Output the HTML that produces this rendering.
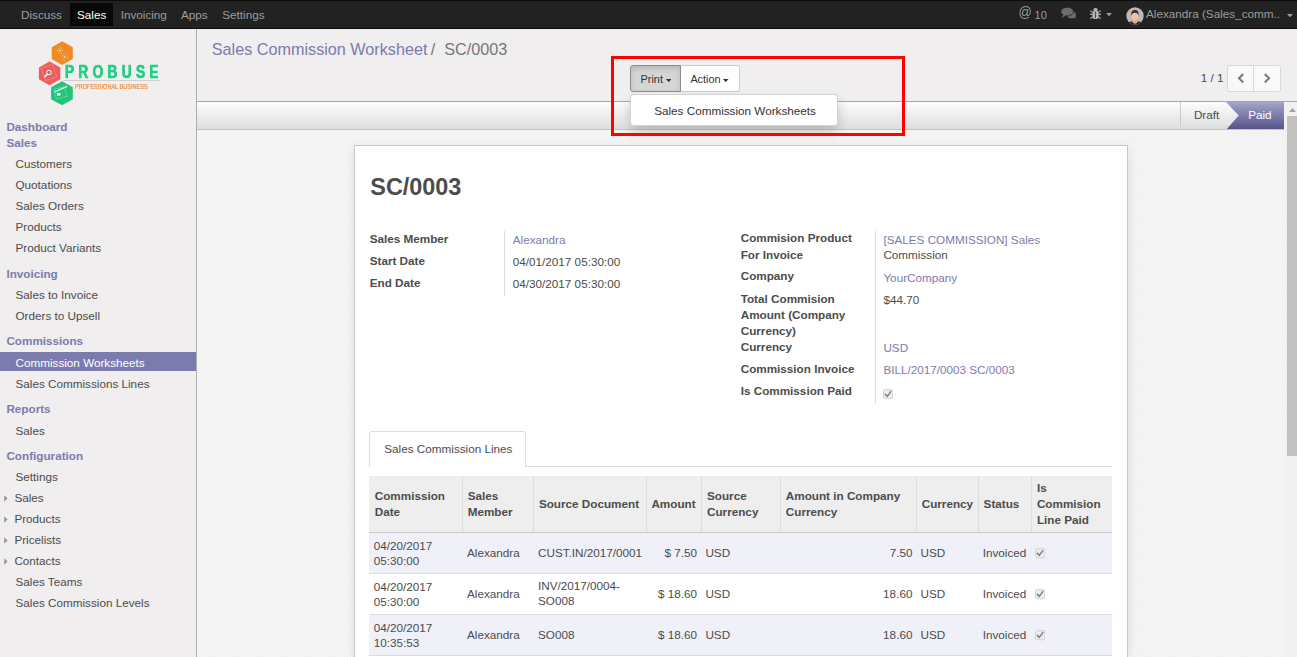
<!DOCTYPE html>
<html><head><meta charset="utf-8"><style>
html,body{margin:0;padding:0;width:1297px;height:657px;overflow:hidden;background:#f0eeee;font-family:"Liberation Sans",sans-serif;}
.b{position:absolute;}
.t{position:absolute;white-space:nowrap;}
.r{text-align:right;}
</style></head><body>
<div class="b" style="left:0px;top:0px;width:1297px;height:29px;background:#0b0b0b;"></div>
<div class="b" style="left:0px;top:1px;width:1297px;height:27px;background:#222;"></div>
<div class="b" style="left:70px;top:3px;width:43px;height:23px;background:#080808;"></div>
<div class="t " style="left:21.00px;top:6.74px;font-size:11.71px;line-height:16px;color:#9d9d9d;">Discuss</div>
<div class="t " style="left:77.00px;top:6.74px;font-size:11.71px;line-height:16px;color:#fff;">Sales</div>
<div class="t " style="left:120.70px;top:6.74px;font-size:11.71px;line-height:16px;color:#9d9d9d;">Invoicing</div>
<div class="t " style="left:181.00px;top:6.74px;font-size:11.71px;line-height:16px;color:#9d9d9d;">Apps</div>
<div class="t " style="left:222.30px;top:6.74px;font-size:11.71px;line-height:16px;color:#9d9d9d;">Settings</div>
<div class="t " style="left:1018.60px;top:4.02px;font-size:13.2px;line-height:18px;color:#9d9d9d;transform:scaleY(1.05);transform-origin:0 80%;">@</div>
<div class="t " style="left:1034.60px;top:7.89px;font-size:11px;line-height:15px;color:#9d9d9d;">10</div>
<svg class="b" style="left:1058px;top:5px" width="22" height="17" viewBox="1058 5 22 17"><ellipse cx="1071.6" cy="14.9" rx="4.3" ry="3.4" fill="#6c6c6c"/><path d="M1073.5 17l2.4 1.9-0.6-2.9z" fill="#6c6c6c"/><ellipse cx="1067.2" cy="11.6" rx="6.4" ry="4.4" fill="#6c6c6c" stroke="#222" stroke-width="0.8"/><path d="M1063.4 14.6l-1.8 3.3 4.2-2.3z" fill="#6c6c6c"/></svg>
<svg class="b" style="left:1088px;top:6px" width="16" height="15" viewBox="1088 6 16 15"><ellipse cx="1095.5" cy="9.6" rx="2.2" ry="1.5" fill="#b4b4b4"/><rect x="1092.4" y="10.6" width="6.2" height="8.4" rx="2.6" fill="#b4b4b4"/><path d="M1090.2 10.6l2.4 1.8M1100.8 10.6l-2.4 1.8M1090 14.4h2.5M1101 14.4h-2.5M1090.4 18.6l2.2-1.8M1100.6 18.6l-2.2-1.8" stroke="#b4b4b4" stroke-width="1.1"/><rect x="1095" y="11.6" width="1" height="6.6" fill="#4a4470"/></svg>
<svg class="b" style="left:1106.4px;top:13px" width="6" height="3.5" viewBox="0 0 6 3.5"><path d="M0 0h6L3 3.3z" fill="#9d9d9d"/></svg>
<svg class="b" style="left:1125.5px;top:6.8px" width="18" height="18" viewBox="0 0 18 18"><clipPath id="av"><circle cx="9" cy="9" r="8.7"/></clipPath><g clip-path="url(#av)"><rect width="18" height="18" fill="#bdb8b3"/><path d="M0.5 18.5c1-3.2 3.6-4.6 8.5-4.6s7.5 1.4 8.5 4.6z" fill="#2e2e33"/><path d="M6 14.2L9 17.2 12 14.2z" fill="#fff"/><path d="M8.5 14.8h1l0.2 2.6-0.7 0.8-0.7-0.8z" fill="#d0202a"/><path d="M6.6 12.5h4.8v2.2l-2.4 1.6-2.4-1.6z" fill="#e0a890"/><ellipse cx="9" cy="9.2" rx="3.3" ry="4.1" fill="#efbfa6"/><path d="M5.3 9.3C4.9 4.6 6.6 3.1 9 3.1s4.1 1.5 3.7 6.2c-0.3-2.4-1.2-3.6-3.7-3.6s-3.4 1.2-3.7 3.6z" fill="#303036"/></g></svg>
<div class="t " style="left:1146.00px;top:5.94px;font-size:11.71px;line-height:16px;color:#9d9d9d;">Alexandra (Sales_comm..</div>
<svg class="b" style="left:1286.5px;top:13.5px" width="6" height="3.5" viewBox="0 0 6 3.5"><path d="M0 0h6L3 3.3z" fill="#9d9d9d"/></svg>
<div class="b" style="left:0px;top:29px;width:196px;height:628px;background:#f0eeee;"></div>
<div class="b" style="left:196px;top:29px;width:1px;height:628px;background:#acacb4;"></div>
<div class="b" style="left:0px;top:352px;width:196px;height:19px;background:#7c7bad;"></div>
<div class="t " style="left:6.40px;top:118.74px;font-size:11.71px;line-height:16px;color:#7c7bad;font-weight:bold;">Dashboard</div>
<div class="t " style="left:6.40px;top:134.84px;font-size:11.71px;line-height:16px;color:#7c7bad;font-weight:bold;">Sales</div>
<div class="t " style="left:6.40px;top:265.94px;font-size:11.71px;line-height:16px;color:#7c7bad;font-weight:bold;">Invoicing</div>
<div class="t " style="left:6.40px;top:332.84px;font-size:11.71px;line-height:16px;color:#7c7bad;font-weight:bold;">Commissions</div>
<div class="t " style="left:6.40px;top:400.94px;font-size:11.71px;line-height:16px;color:#7c7bad;font-weight:bold;">Reports</div>
<div class="t " style="left:6.40px;top:447.84px;font-size:11.71px;line-height:16px;color:#7c7bad;font-weight:bold;">Configuration</div>
<div class="t " style="left:15.50px;top:155.54px;font-size:11.71px;line-height:16px;color:#4c4c4c;">Customers</div>
<div class="t " style="left:15.50px;top:176.54px;font-size:11.71px;line-height:16px;color:#4c4c4c;">Quotations</div>
<div class="t " style="left:15.50px;top:197.74px;font-size:11.71px;line-height:16px;color:#4c4c4c;">Sales Orders</div>
<div class="t " style="left:15.50px;top:218.84px;font-size:11.71px;line-height:16px;color:#4c4c4c;">Products</div>
<div class="t " style="left:15.50px;top:239.74px;font-size:11.71px;line-height:16px;color:#4c4c4c;">Product Variants</div>
<div class="t " style="left:15.50px;top:286.64px;font-size:11.71px;line-height:16px;color:#4c4c4c;">Sales to Invoice</div>
<div class="t " style="left:15.50px;top:307.54px;font-size:11.71px;line-height:16px;color:#4c4c4c;">Orders to Upsell</div>
<div class="t " style="left:15.50px;top:375.84px;font-size:11.71px;line-height:16px;color:#4c4c4c;">Sales Commissions Lines</div>
<div class="t " style="left:15.50px;top:422.74px;font-size:11.71px;line-height:16px;color:#4c4c4c;">Sales</div>
<div class="t " style="left:15.50px;top:468.94px;font-size:11.71px;line-height:16px;color:#4c4c4c;">Settings</div>
<div class="t " style="left:15.50px;top:573.94px;font-size:11.71px;line-height:16px;color:#4c4c4c;">Sales Teams</div>
<div class="t " style="left:15.50px;top:594.94px;font-size:11.71px;line-height:16px;color:#4c4c4c;">Sales Commission Levels</div>
<div class="t " style="left:15.50px;top:354.74px;font-size:11.71px;line-height:16px;color:#fff;">Commission Worksheets</div>
<div class="t " style="left:14.40px;top:489.94px;font-size:11.71px;line-height:16px;color:#4c4c4c;">Sales</div>
<svg class="b" style="left:3.9px;top:494.7px" width="4" height="7" viewBox="0 0 4 7"><path d="M0.2 0.3L3.6 3.5 0.2 6.7z" fill="#999"/></svg>
<div class="t " style="left:14.40px;top:511.14px;font-size:11.71px;line-height:16px;color:#4c4c4c;">Products</div>
<svg class="b" style="left:3.9px;top:515.9000000000001px" width="4" height="7" viewBox="0 0 4 7"><path d="M0.2 0.3L3.6 3.5 0.2 6.7z" fill="#999"/></svg>
<div class="t " style="left:14.40px;top:532.14px;font-size:11.71px;line-height:16px;color:#4c4c4c;">Pricelists</div>
<svg class="b" style="left:3.9px;top:536.9000000000001px" width="4" height="7" viewBox="0 0 4 7"><path d="M0.2 0.3L3.6 3.5 0.2 6.7z" fill="#999"/></svg>
<div class="t " style="left:14.40px;top:552.94px;font-size:11.71px;line-height:16px;color:#4c4c4c;">Contacts</div>
<svg class="b" style="left:3.9px;top:557.7px" width="4" height="7" viewBox="0 0 4 7"><path d="M0.2 0.3L3.6 3.5 0.2 6.7z" fill="#999"/></svg>
<svg class="b" style="left:36px;top:39px" width="130" height="70" viewBox="36 39 130 70">
<defs><filter id="blr"><feGaussianBlur stdDeviation="0.25"/></filter></defs>
<g filter="url(#blr)">
<polygon points="62.2,41.3 72.8,47.2 72.8,59 62.2,64.9 51.7,59 51.7,47.2" fill="#f08a24"/>
<polygon points="49.6,61.5 60.3,67.4 60.3,79.3 49.6,85.2 38.9,79.3 38.9,67.4" fill="#ef5b5b"/>
<polygon points="62,81.2 72.8,87.2 72.8,99.2 62,105.2 51.1,99.2 51.1,87.2" fill="#22c47a"/>
<circle cx="60" cy="50.5" r="2.6" fill="none" stroke="#f9c08a" stroke-width="0.9" stroke-dasharray="0.9 0.6"/><circle cx="60" cy="50.5" r="0.8" fill="#fff"/>
<circle cx="64.5" cy="57" r="2.6" fill="none" stroke="#f9c08a" stroke-width="0.9" stroke-dasharray="0.9 0.6"/><circle cx="64.5" cy="57" r="0.8" fill="#fff"/>
<rect x="43" y="66" width="12" height="13" fill="none" stroke="#f5a0a0" stroke-width="0.5" transform="rotate(-20 49 72.5)"/><circle cx="49" cy="72.5" r="2.3" fill="none" stroke="#fff" stroke-width="1"/>
<path d="M47.3 74.2L44.3 77.3" stroke="#fff" stroke-width="1.4"/>
<path d="M54.5 92L67 86.5" stroke="#fff" stroke-width="1.1"/>
<rect x="57" y="93" width="3.5" height="2.5" fill="#fff"/><rect x="55" y="88" width="11" height="10" fill="none" stroke="#8fe3bb" stroke-width="0.5" transform="rotate(-15 60 93)"/>
<g transform="translate(64.8,77.8) scale(0.78,1)"><text x="0.2" y="0.6" font-family="Liberation Sans" font-weight="bold" font-size="17.8" fill="#16a064" textLength="120" lengthAdjust="spacing">PROBUSE</text><text x="0" y="0" font-family="Liberation Sans" font-weight="bold" font-size="17.8" fill="#1fd386" stroke="#1fd386" stroke-width="0.3" textLength="120" lengthAdjust="spacing">PROBUSE</text></g>
<rect x="63" y="80" width="97" height="0.8" fill="#c9c9c9"/>
<text x="75" y="89.2" font-family="Liberation Sans" font-size="6.6" fill="#ee8a30" stroke="#ee8a30" stroke-width="0.15" textLength="72.6" lengthAdjust="spacingAndGlyphs">PROFESSIONAL BUSINESS</text>
</g></svg>
<div class="b" style="left:197px;top:29px;width:1100px;height:72px;background:#f0eeee;"></div>
<div class="b" style="left:197px;top:101px;width:1100px;height:1px;background:#a6a6a6;"></div>
<div class="t " style="left:211.80px;top:37.58px;font-size:16.21px;line-height:23px;color:#7c7bad;">Sales Commission Worksheet</div>
<div class="t " style="left:430.70px;top:37.58px;font-size:16.21px;line-height:23px;color:#777;">/</div>
<div class="t " style="left:444.30px;top:37.58px;font-size:16.21px;line-height:23px;color:#777;">SC/0003</div>
<div class="b" style="left:630px;top:65px;width:51px;height:26.5px;background:#d5d5d5;border:1px solid #8c8c8c;border-radius:3px 0 0 3px;box-sizing:border-box;box-shadow:inset 0 3px 5px rgba(0,0,0,.125);"></div>
<div class="b" style="left:680.5px;top:65px;width:59.0px;height:26.5px;background:#fff;border:1px solid #ccc;border-left:none;border-radius:0 3px 3px 0;box-sizing:border-box;"></div>
<div class="t " style="left:640.60px;top:71.64px;font-size:10.85px;line-height:15px;color:#333;">Print</div>
<div class="t " style="left:690.40px;top:71.64px;font-size:10.85px;line-height:15px;color:#333;">Action</div>
<svg class="b" style="left:665.6px;top:78.5px" width="5.5" height="3.2" viewBox="0 0 5.5 3.2"><path d="M0 0h5.5L2.75 3.2z" fill="#333"/></svg>
<svg class="b" style="left:723.2px;top:78.5px" width="5.5" height="3.2" viewBox="0 0 5.5 3.2"><path d="M0 0h5.5L2.75 3.2z" fill="#333"/></svg>
<div class="t " style="left:1200.80px;top:69.64px;font-size:11.71px;line-height:16px;color:#4c4c4c;">1 / 1</div>
<div class="b" style="left:1227px;top:65px;width:54px;height:27px;background:#f9f9f9;border:1px solid #d8d8d8;border-radius:3px;box-sizing:border-box;"></div>
<div class="b" style="left:1253px;top:65px;width:1px;height:27px;background:#d8d8d8;"></div>
<svg class="b" style="left:1236.5px;top:72.5px" width="8" height="10.5" viewBox="0 0 8 10.5"><path d="M6.2 1L2 5.25 6.2 9.5" fill="none" stroke="#777" stroke-width="2"/></svg>
<svg class="b" style="left:1262.5px;top:72.5px" width="8" height="10.5" viewBox="0 0 8 10.5"><path d="M1.8 1L6 5.25 1.8 9.5" fill="none" stroke="#777" stroke-width="2"/></svg>
<div class="b" style="left:197px;top:102px;width:1087px;height:27px;background:linear-gradient(#fcfcfc,#dedede);"></div>
<div class="b" style="left:197px;top:129px;width:1087px;height:1px;background:#c4c4c4;"></div>
<div class="b" style="left:197px;top:130px;width:1087px;height:527px;background-color:#f6f6f6;background-image:conic-gradient(from 270deg at 1px 1px,#fff 90deg,transparent 0),linear-gradient(#eeeeee 1px,transparent 1px),linear-gradient(90deg,#eeeeee 1px,transparent 1px);background-size:3px 3px,3px 3px,3px 3px;background-position:1px 1px,1px 1px,1px 1px;"></div>
<div class="b" style="left:1180px;top:102px;width:1px;height:25px;background:#c9c9c9;"></div>
<div class="t " style="left:1193.90px;top:106.69px;font-size:11.71px;line-height:16px;color:#4c4c4c;">Draft</div>
<svg class="b" style="left:1226px;top:102px" width="58" height="27" viewBox="0 0 58 27"><defs><linearGradient id="pg" x1="0" y1="0" x2="0" y2="1"><stop offset="0" stop-color="#a5a4ca"/><stop offset="1" stop-color="#55548a"/></linearGradient></defs><path d="M0 0H58V27H0.8L12.7 13.5z" fill="url(#pg)"/></svg>
<div class="t " style="left:1248.20px;top:106.69px;font-size:11.71px;line-height:16px;color:#fff;">Paid</div>
<div class="b" style="left:1284px;top:102px;width:13px;height:555px;background:#f1f1f1;"></div>
<svg class="b" style="left:1289px;top:107.8px" width="7" height="4" viewBox="0 0 7 4"><path d="M3.5 0L7 4H0z" fill="#a3a3a3"/></svg>
<div class="b" style="left:1287px;top:116px;width:10px;height:340px;background:#c1c1c1;"></div>
<div class="b" style="left:354px;top:145px;width:774px;height:512px;background:#fff;border:1px solid #c8c8d4;border-bottom:none;box-sizing:border-box;box-shadow:0 3px 10px rgba(0,0,0,.1);"></div>
<div class="t " style="left:370.30px;top:171.38px;font-size:23.42px;line-height:33px;color:#4c4c4c;font-weight:bold;">SC/0003</div>
<div class="t " style="left:369.70px;top:230.84px;font-size:11.71px;line-height:16px;color:#4c4c4c;font-weight:bold;">Sales Member</div>
<div class="t " style="left:369.70px;top:252.84px;font-size:11.71px;line-height:16px;color:#4c4c4c;font-weight:bold;">Start Date</div>
<div class="t " style="left:369.70px;top:274.94px;font-size:11.71px;line-height:16px;color:#4c4c4c;font-weight:bold;">End Date</div>
<div class="b" style="left:504px;top:231px;width:1px;height:65px;background:#ddd;"></div>
<div class="t " style="left:512.80px;top:231.74px;font-size:11.71px;line-height:16px;color:#7c7bad;">Alexandra</div>
<div class="t " style="left:512.80px;top:253.54px;font-size:11.71px;line-height:16px;color:#4c4c4c;">04/01/2017 05:30:00</div>
<div class="t " style="left:512.80px;top:275.54px;font-size:11.71px;line-height:16px;color:#4c4c4c;">04/30/2017 05:30:00</div>
<div class="t " style="left:740.70px;top:230.44px;font-size:11.71px;line-height:16px;color:#4c4c4c;font-weight:bold;">Commision Product</div>
<div class="t " style="left:740.70px;top:246.74px;font-size:11.71px;line-height:16px;color:#4c4c4c;font-weight:bold;">For Invoice</div>
<div class="t " style="left:740.70px;top:268.44px;font-size:11.71px;line-height:16px;color:#4c4c4c;font-weight:bold;">Company</div>
<div class="t " style="left:740.70px;top:290.64px;font-size:11.71px;line-height:16px;color:#4c4c4c;font-weight:bold;">Total Commision</div>
<div class="t " style="left:740.70px;top:306.69px;font-size:11.71px;line-height:16px;color:#4c4c4c;font-weight:bold;">Amount (Company</div>
<div class="t " style="left:740.70px;top:322.74px;font-size:11.71px;line-height:16px;color:#4c4c4c;font-weight:bold;">Currency)</div>
<div class="t " style="left:740.70px;top:338.74px;font-size:11.71px;line-height:16px;color:#4c4c4c;font-weight:bold;">Currency</div>
<div class="t " style="left:740.70px;top:360.74px;font-size:11.71px;line-height:16px;color:#4c4c4c;font-weight:bold;">Commission Invoice</div>
<div class="t " style="left:740.70px;top:382.74px;font-size:11.71px;line-height:16px;color:#4c4c4c;font-weight:bold;">Is Commission Paid</div>
<div class="b" style="left:875px;top:231px;width:1px;height:173px;background:#ddd;"></div>
<div class="t " style="left:883.40px;top:231.54px;font-size:11.71px;line-height:16px;color:#7c7bad;">[SALES COMMISSION] Sales</div>
<div class="t " style="left:883.40px;top:247.24px;font-size:11.71px;line-height:16px;color:#4c4c4c;">Commission</div>
<div class="t " style="left:883.40px;top:269.84px;font-size:11.71px;line-height:16px;color:#7c7bad;">YourCompany</div>
<div class="t " style="left:883.40px;top:291.74px;font-size:11.71px;line-height:16px;color:#4c4c4c;">$44.70</div>
<div class="t " style="left:883.40px;top:339.64px;font-size:11.71px;line-height:16px;color:#7c7bad;">USD</div>
<div class="t " style="left:883.40px;top:361.54px;font-size:11.71px;line-height:16px;color:#7c7bad;">BILL/2017/0003 SC/0003</div>
<svg class="b" style="left:882.8px;top:388.6px" width="10.5" height="10.5" viewBox="0 0 10.5 10.5"><rect x="0.6" y="0.6" width="9.2" height="9.2" rx="1.6" fill="#ececec" stroke="#cfcfcf" stroke-width="0.9"/><path d="M2.4 5.4L4.3 7.4 7.8 2.6" fill="none" stroke="#858585" stroke-width="1.6" stroke-linecap="round" stroke-linejoin="round"/></svg>
<div class="b" style="left:369px;top:466px;width:743px;height:1px;background:#ddd;"></div>
<div class="b" style="left:369px;top:431.4px;width:157px;height:35.60000000000002px;background:#fff;border:1px solid #ddd;border-bottom:none;border-radius:3px 3px 0 0;box-sizing:border-box;"></div>
<div class="t " style="left:384.30px;top:440.94px;font-size:11.71px;line-height:16px;color:#4c4c4c;">Sales Commission Lines</div>
<div class="b" style="left:369px;top:476px;width:743px;height:56px;background:#eee;"></div>
<div class="b" style="left:369px;top:532px;width:743px;height:1px;background:#ccc;"></div>
<div class="b" style="left:462px;top:476px;width:1px;height:56px;background:#ddd;"></div>
<div class="b" style="left:533px;top:476px;width:1px;height:56px;background:#ddd;"></div>
<div class="b" style="left:646px;top:476px;width:1px;height:56px;background:#ddd;"></div>
<div class="b" style="left:701px;top:476px;width:1px;height:56px;background:#ddd;"></div>
<div class="b" style="left:780px;top:476px;width:1px;height:56px;background:#ddd;"></div>
<div class="b" style="left:916px;top:476px;width:1px;height:56px;background:#ddd;"></div>
<div class="b" style="left:978px;top:476px;width:1px;height:56px;background:#ddd;"></div>
<div class="b" style="left:1031px;top:476px;width:1px;height:56px;background:#ddd;"></div>
<div class="t " style="left:374.75px;top:488.14px;font-size:11.71px;line-height:16px;color:#4c4c4c;font-weight:bold;">Commission</div>
<div class="t " style="left:374.75px;top:503.54px;font-size:11.71px;line-height:16px;color:#4c4c4c;font-weight:bold;">Date</div>
<div class="t " style="left:467.70px;top:488.14px;font-size:11.71px;line-height:16px;color:#4c4c4c;font-weight:bold;">Sales</div>
<div class="t " style="left:467.70px;top:503.54px;font-size:11.71px;line-height:16px;color:#4c4c4c;font-weight:bold;">Member</div>
<div class="t " style="left:538.90px;top:495.84px;font-size:11.71px;line-height:16px;color:#4c4c4c;font-weight:bold;">Source Document</div>
<div class="t " style="left:651.40px;top:495.84px;font-size:11.71px;line-height:16px;color:#4c4c4c;font-weight:bold;">Amount</div>
<div class="t " style="left:707.00px;top:488.14px;font-size:11.71px;line-height:16px;color:#4c4c4c;font-weight:bold;">Source</div>
<div class="t " style="left:707.00px;top:503.54px;font-size:11.71px;line-height:16px;color:#4c4c4c;font-weight:bold;">Currency</div>
<div class="t " style="left:785.80px;top:488.14px;font-size:11.71px;line-height:16px;color:#4c4c4c;font-weight:bold;">Amount in Company</div>
<div class="t " style="left:785.80px;top:503.54px;font-size:11.71px;line-height:16px;color:#4c4c4c;font-weight:bold;">Currency</div>
<div class="t " style="left:921.70px;top:496.04px;font-size:11.71px;line-height:16px;color:#4c4c4c;font-weight:bold;">Currency</div>
<div class="t " style="left:983.60px;top:496.04px;font-size:11.71px;line-height:16px;color:#4c4c4c;font-weight:bold;">Status</div>
<div class="t " style="left:1036.90px;top:479.94px;font-size:11.71px;line-height:16px;color:#4c4c4c;font-weight:bold;">Is</div>
<div class="t " style="left:1036.90px;top:496.04px;font-size:11.71px;line-height:16px;color:#4c4c4c;font-weight:bold;">Commision</div>
<div class="t " style="left:1036.90px;top:512.14px;font-size:11.71px;line-height:16px;color:#4c4c4c;font-weight:bold;">Line Paid</div>
<div class="b" style="left:369px;top:533px;width:743px;height:40.299999999999955px;background:#f0f0f8;"></div>
<div class="b" style="left:369px;top:573.3px;width:743px;height:1.0px;background:#ddd;"></div>
<div class="b" style="left:369px;top:574.3px;width:743px;height:39.90000000000009px;background:#fff;"></div>
<div class="b" style="left:369px;top:614.2px;width:743px;height:1.0px;background:#ddd;"></div>
<div class="b" style="left:369px;top:615.2px;width:743px;height:40.0px;background:#f0f0f8;"></div>
<div class="b" style="left:369px;top:655.2px;width:743px;height:1.0px;background:#ddd;"></div>
<div class="t " style="left:373.80px;top:537.64px;font-size:11.71px;line-height:16px;color:#4c4c4c;">04/20/2017</div>
<div class="t " style="left:373.80px;top:553.24px;font-size:11.71px;line-height:16px;color:#4c4c4c;">05:30:00</div>
<div class="t " style="left:467.00px;top:544.94px;font-size:11.71px;line-height:16px;color:#4c4c4c;">Alexandra</div>
<div class="t " style="left:538.00px;top:544.94px;font-size:11.71px;line-height:16px;color:#4c4c4c;">CUST.IN/2017/0001</div>
<div class="t r" style="right:600px;top:544.94px;font-size:11.71px;line-height:16px;color:#4c4c4c">$ 7.50</div>
<div class="t " style="left:705.40px;top:544.94px;font-size:11.71px;line-height:16px;color:#4c4c4c;">USD</div>
<div class="t r" style="right:384.6px;top:544.94px;font-size:11.71px;line-height:16px;color:#4c4c4c">7.50</div>
<div class="t " style="left:920.60px;top:544.94px;font-size:11.71px;line-height:16px;color:#4c4c4c;">USD</div>
<div class="t " style="left:982.70px;top:544.94px;font-size:11.71px;line-height:16px;color:#4c4c4c;">Invoiced</div>
<svg class="b" style="left:1034.8px;top:548.2px" width="10.5" height="10.5" viewBox="0 0 10.5 10.5"><rect x="0.6" y="0.6" width="9.2" height="9.2" rx="1.6" fill="#ececec" stroke="#cfcfcf" stroke-width="0.9"/><path d="M2.4 5.4L4.3 7.4 7.8 2.6" fill="none" stroke="#858585" stroke-width="1.6" stroke-linecap="round" stroke-linejoin="round"/></svg>
<div class="t " style="left:373.80px;top:578.64px;font-size:11.71px;line-height:16px;color:#4c4c4c;">04/20/2017</div>
<div class="t " style="left:373.80px;top:594.24px;font-size:11.71px;line-height:16px;color:#4c4c4c;">05:30:00</div>
<div class="t " style="left:467.00px;top:585.94px;font-size:11.71px;line-height:16px;color:#4c4c4c;">Alexandra</div>
<div class="t " style="left:538.00px;top:577.94px;font-size:11.71px;line-height:16px;color:#4c4c4c;">INV/2017/0004-</div>
<div class="t " style="left:538.00px;top:593.44px;font-size:11.71px;line-height:16px;color:#4c4c4c;">SO008</div>
<div class="t r" style="right:600px;top:585.94px;font-size:11.71px;line-height:16px;color:#4c4c4c">$ 18.60</div>
<div class="t " style="left:705.40px;top:585.94px;font-size:11.71px;line-height:16px;color:#4c4c4c;">USD</div>
<div class="t r" style="right:384.6px;top:585.94px;font-size:11.71px;line-height:16px;color:#4c4c4c">18.60</div>
<div class="t " style="left:920.60px;top:585.94px;font-size:11.71px;line-height:16px;color:#4c4c4c;">USD</div>
<div class="t " style="left:982.70px;top:585.94px;font-size:11.71px;line-height:16px;color:#4c4c4c;">Invoiced</div>
<svg class="b" style="left:1034.8px;top:589.2px" width="10.5" height="10.5" viewBox="0 0 10.5 10.5"><rect x="0.6" y="0.6" width="9.2" height="9.2" rx="1.6" fill="#ececec" stroke="#cfcfcf" stroke-width="0.9"/><path d="M2.4 5.4L4.3 7.4 7.8 2.6" fill="none" stroke="#858585" stroke-width="1.6" stroke-linecap="round" stroke-linejoin="round"/></svg>
<div class="t " style="left:373.80px;top:619.64px;font-size:11.71px;line-height:16px;color:#4c4c4c;">04/20/2017</div>
<div class="t " style="left:373.80px;top:635.24px;font-size:11.71px;line-height:16px;color:#4c4c4c;">10:35:53</div>
<div class="t " style="left:467.00px;top:626.94px;font-size:11.71px;line-height:16px;color:#4c4c4c;">Alexandra</div>
<div class="t " style="left:538.00px;top:626.94px;font-size:11.71px;line-height:16px;color:#4c4c4c;">SO008</div>
<div class="t r" style="right:600px;top:626.94px;font-size:11.71px;line-height:16px;color:#4c4c4c">$ 18.60</div>
<div class="t " style="left:705.40px;top:626.94px;font-size:11.71px;line-height:16px;color:#4c4c4c;">USD</div>
<div class="t r" style="right:384.6px;top:626.94px;font-size:11.71px;line-height:16px;color:#4c4c4c">18.60</div>
<div class="t " style="left:920.60px;top:626.94px;font-size:11.71px;line-height:16px;color:#4c4c4c;">USD</div>
<div class="t " style="left:982.70px;top:626.94px;font-size:11.71px;line-height:16px;color:#4c4c4c;">Invoiced</div>
<svg class="b" style="left:1034.8px;top:630.2px" width="10.5" height="10.5" viewBox="0 0 10.5 10.5"><rect x="0.6" y="0.6" width="9.2" height="9.2" rx="1.6" fill="#ececec" stroke="#cfcfcf" stroke-width="0.9"/><path d="M2.4 5.4L4.3 7.4 7.8 2.6" fill="none" stroke="#858585" stroke-width="1.6" stroke-linecap="round" stroke-linejoin="round"/></svg>
<div class="b" style="left:630px;top:94px;width:208px;height:32px;background:#fff;border:1px solid rgba(0,0,0,.17);border-radius:4px;box-sizing:border-box;box-shadow:0 6px 12px rgba(0,0,0,.175);"></div>
<div class="t " style="left:654.20px;top:102.94px;font-size:11.71px;line-height:16px;color:#333;">Sales Commission Worksheets</div>
<div class="b" style="left:611px;top:56px;width:294px;height:80px;border:3px solid #f00;box-sizing:border-box;"></div>
</body></html>
